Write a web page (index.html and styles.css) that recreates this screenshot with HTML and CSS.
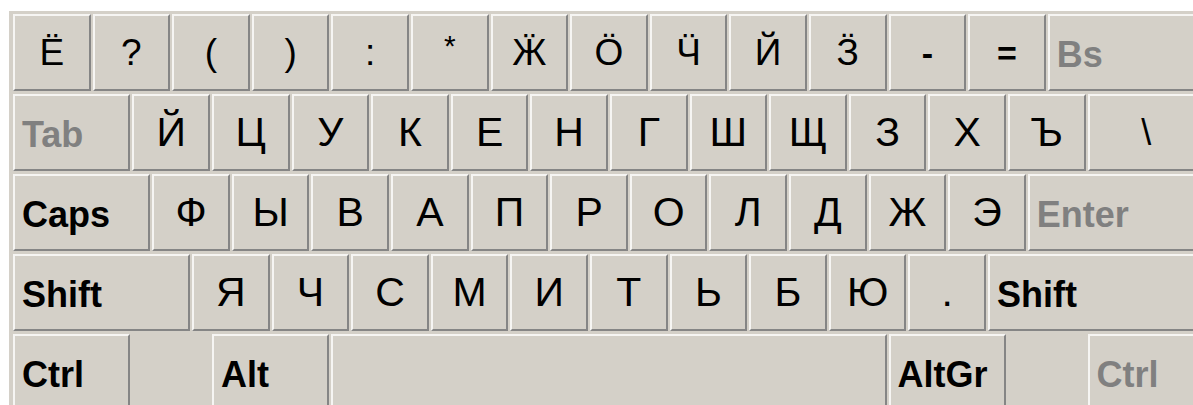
FILE: index.html
```html
<!DOCTYPE html>
<html lang="ru">
<head>
<meta charset="utf-8">
<title>Экранная клавиатура</title>
<link rel="stylesheet" href="styles.css">
</head>
<body>
<div class="panel">
  <div class="board">
    <div class="row row-top">
      <div class="key u1"><span>Ё</span></div>
      <div class="key u1"><span>?</span></div>
      <div class="key u1"><span>(</span></div>
      <div class="key u1"><span>)</span></div>
      <div class="key u1"><span>:</span></div>
      <div class="key u1"><span class="star">*</span></div>
      <div class="key u1"><span>Ӝ</span></div>
      <div class="key u1"><span>Ӧ</span></div>
      <div class="key u1"><span>Ӵ</span></div>
      <div class="key u1"><span>Й</span></div>
      <div class="key u1"><span>Ӟ</span></div>
      <div class="key u1"><span class="sym">-</span></div>
      <div class="key u1"><span class="sym">=</span></div>
      <div class="key u2 mod off"><span>Bs</span></div>
    </div>
    <div class="row">
      <div class="key u15 mod off"><span>Tab</span></div>
      <div class="key u1"><span>Й</span></div>
      <div class="key u1"><span>Ц</span></div>
      <div class="key u1"><span>У</span></div>
      <div class="key u1"><span>К</span></div>
      <div class="key u1"><span>Е</span></div>
      <div class="key u1"><span>Н</span></div>
      <div class="key u1"><span>Г</span></div>
      <div class="key u1"><span>Ш</span></div>
      <div class="key u1"><span>Щ</span></div>
      <div class="key u1"><span>З</span></div>
      <div class="key u1"><span>Х</span></div>
      <div class="key u1"><span>Ъ</span></div>
      <div class="key u15"><span class="bslash">\</span></div>
    </div>
    <div class="row">
      <div class="key u175 mod"><span>Caps</span></div>
      <div class="key u1"><span>Ф</span></div>
      <div class="key u1"><span>Ы</span></div>
      <div class="key u1"><span>В</span></div>
      <div class="key u1"><span>А</span></div>
      <div class="key u1"><span>П</span></div>
      <div class="key u1"><span>Р</span></div>
      <div class="key u1"><span>О</span></div>
      <div class="key u1"><span>Л</span></div>
      <div class="key u1"><span>Д</span></div>
      <div class="key u1"><span>Ж</span></div>
      <div class="key u1"><span>Э</span></div>
      <div class="key u225 mod off"><span>Enter</span></div>
    </div>
    <div class="row">
      <div class="key u225 mod"><span>Shift</span></div>
      <div class="key u1"><span>Я</span></div>
      <div class="key u1"><span>Ч</span></div>
      <div class="key u1"><span>С</span></div>
      <div class="key u1"><span>М</span></div>
      <div class="key u1"><span>И</span></div>
      <div class="key u1"><span>Т</span></div>
      <div class="key u1"><span>Ь</span></div>
      <div class="key u1"><span>Б</span></div>
      <div class="key u1"><span>Ю</span></div>
      <div class="key u1"><span>.</span></div>
      <div class="key u275 mod"><span>Shift</span></div>
    </div>
    <div class="row">
      <div class="key u15 mod"><span>Ctrl</span></div>
      <div class="gap u1"></div>
      <div class="key u15 mod"><span>Alt</span></div>
      <div class="key u7"></div>
      <div class="key u15 mod"><span>AltGr</span></div>
      <div class="gap u1"></div>
      <div class="key u15 mod off"><span>Ctrl</span></div>
    </div>
  </div>
</div>
</body>
</html>
```

FILE: styles.css
```css
html, body {
  margin: 0;
  padding: 0;
  background: #ffffff;
  overflow: hidden;
  height: 405px;
}

.panel {
  margin: 11px 0 0 9px;
  padding: 3px 0 0 4px;
  background: #d4d0c8;
  height: 391px;
  overflow: hidden;
}

.board {
  display: flex;
  flex-direction: column;
  gap: 3px;
  width: 1220px;
}

.row {
  display: flex;
  gap: 2px;
  height: 77px;
}

.key,
.gap {
  flex: 0 0 auto;
  box-sizing: border-box;
  height: 77px;
}

.key {
  background: #d4d0c8;
  border-top: 2px solid #f6f5f3;
  border-left: 2px solid #f6f5f3;
  border-right: 2px solid #858585;
  border-bottom: 2px solid #858585;
  display: flex;
  align-items: center;
  justify-content: center;
  font-family: "Liberation Sans", "DejaVu Sans", Arial, sans-serif;
  font-size: 41px;
  line-height: 1;
  color: #000000;
}

.key span {
  display: block;
}

.row-top .key {
  font-size: 37px;
}

.row-top .key .star {
  font-size: 30px;
  margin-top: -14px;
}

.row-top .key .sym {
  font-weight: bold;
  font-size: 34px;
}

.bslash {
  font-size: 36px;
}

/* key widths: one unit is 79.6px, 2px gap between keys */
.u1   { width: 77.6px; }
.u15  { width: 117.4px; }
.u175 { width: 137.3px; }
.u2   { width: 157.2px; }
.u225 { width: 177.1px; }
.u275 { width: 216.9px; }
.u7   { width: 555.2px; }

.gap {
  background: transparent;
}

.mod {
  justify-content: flex-start;
  padding-left: 7px;
  padding-top: 4px;
}

.key.mod,
.row-top .key.mod {
  font-size: 36px;
  font-weight: bold;
}

.off {
  color: #808080;
}
```
